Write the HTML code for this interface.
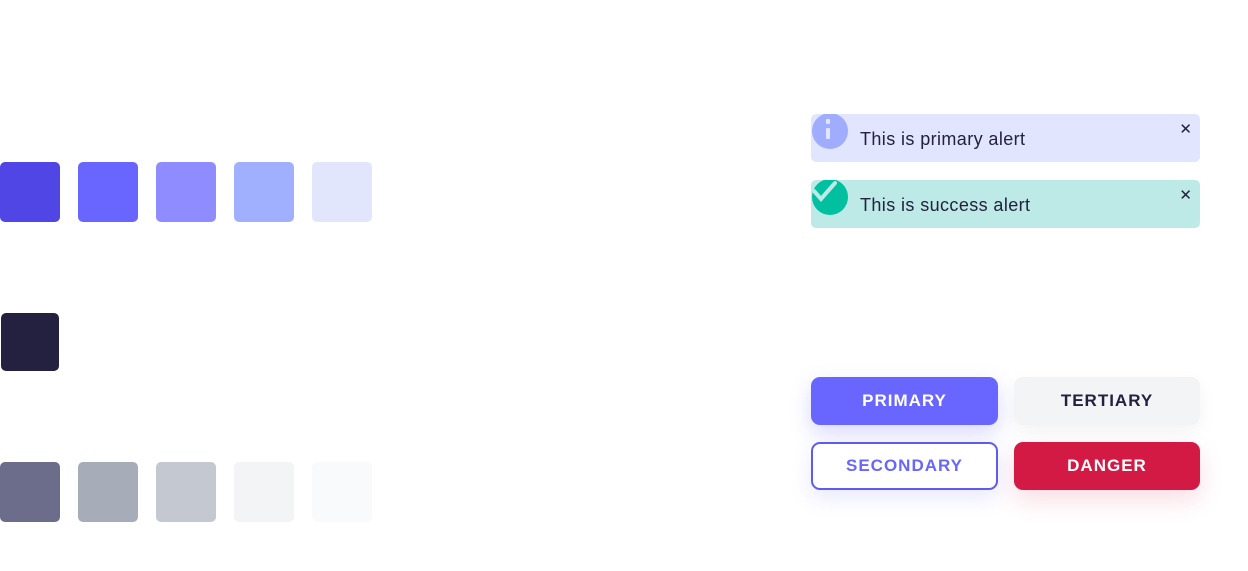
<!DOCTYPE html>
<html><head><style>
body{margin:0;width:1248px;height:571px;background:#fff;position:relative;overflow:hidden;font-family:"Liberation Sans","DejaVu Sans",sans-serif}
.s{position:absolute;width:60px;height:60px;border-radius:5px}
.al{position:absolute;left:811px;width:389px;height:48px;border-radius:5px;overflow:hidden}
.al .c{position:absolute;left:1px;top:-1px;width:36px;height:36px;border-radius:50%}
.al .t{position:absolute;left:49px;top:15px;font-size:18px;color:#23213f;letter-spacing:0.4px}
.al .x{position:absolute;right:8px;top:6px;font-size:15px;color:#23213f}
.b{position:absolute;width:187px;height:48px;border-radius:9px;box-sizing:border-box;display:flex;align-items:center;justify-content:center;font-weight:bold;font-size:17px;letter-spacing:1px}
</style></head><body>
<div class="s" style="left:0;top:162px;background:#4f46e5"></div>
<div class="s" style="left:78px;top:162px;background:#6966ff"></div>
<div class="s" style="left:156px;top:162px;background:#8e8cff"></div>
<div class="s" style="left:234px;top:162px;background:#a0b0ff"></div>
<div class="s" style="left:312px;top:162px;background:#e2e6fc"></div>
<div class="s" style="left:1px;top:313px;width:58px;height:58px;background:#23213f"></div>
<div class="s" style="left:0;top:462px;background:#6b6d8b"></div>
<div class="s" style="left:78px;top:462px;background:#a6adb9"></div>
<div class="s" style="left:156px;top:462px;background:#c3c8d1"></div>
<div class="s" style="left:234px;top:462px;background:#f3f4f6"></div>
<div class="s" style="left:312px;top:462px;background:#f9fafb"></div>

<div class="al" style="top:114px;background:#e1e5fd">
 <div class="c" style="background:#a0adff"></div>
 <div style="position:absolute;left:15px;top:5px;width:4px;height:5px;background:#e1e5fd;border-radius:1px"></div>
 <div style="position:absolute;left:15px;top:14px;width:4px;height:11px;background:#e1e5fd;border-radius:1px"></div>
 <div class="t">This is primary alert</div><div class="x">✕</div>
</div>
<div class="al" style="top:180px;background:#bdeae6">
 <div class="c" style="background:#00c0a0"></div>
 <svg style="position:absolute;left:0;top:0" width="40" height="30"><path d="M3 11 L10 19 L24 3" stroke="#bdeae6" stroke-width="4" fill="none" stroke-linecap="round"/></svg>
 <div class="t">This is success alert</div><div class="x">✕</div>
</div>

<div class="b" style="left:811px;top:377px;background:#6966ff;color:#fff;box-shadow:0 8px 20px rgba(105,102,255,.25)">PRIMARY</div>
<div class="b" style="left:1014px;top:377px;width:186px;background:#f3f4f6;color:#23213f;box-shadow:0 6px 18px rgba(0,0,0,.05)">TERTIARY</div>
<div class="b" style="left:811px;top:442px;background:#fff;border:2px solid #5e5cf0;color:#6966ff;box-shadow:0 8px 20px rgba(105,102,255,.15)">SECONDARY</div>
<div class="b" style="left:1014px;top:442px;width:186px;background:#d21a45;color:#fff;box-shadow:0 10px 24px rgba(210,26,69,.15)">DANGER</div>
</body></html>
